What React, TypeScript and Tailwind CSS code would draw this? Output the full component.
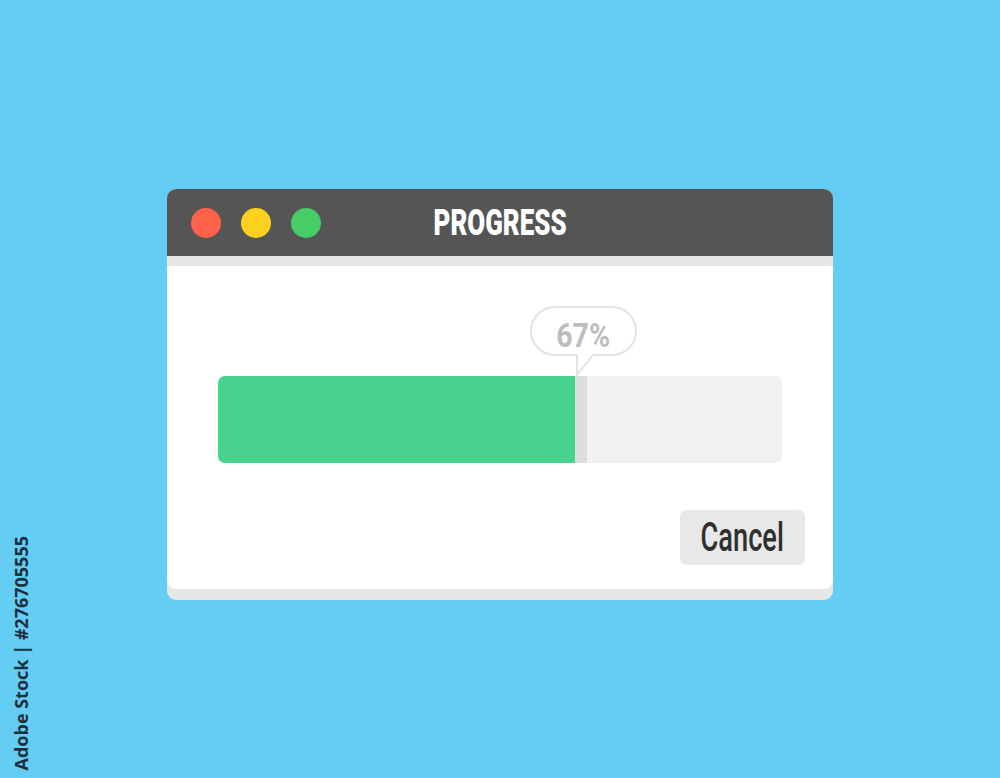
import React from "react";

function Bubble({ label }: { label: string }) {
  return (
    <div className="relative ml-[312px] h-[70px] w-[107px]">
      <svg width="107" height="70" viewBox="0 0 107 70" className="block">
        <path
          d="M25 1 H82 A24 24 0 0 1 82 49 H63 L47 69 V49 H25 A24 24 0 0 1 25 1 Z"
          fill="#ffffff"
          stroke="#e3e3e3"
          strokeWidth="2"
          strokeLinejoin="round"
        />
      </svg>
      <div className="absolute left-0 top-0 flex h-[50px] w-[107px] items-center justify-center pt-[7px]">
        <span className="inline-block scale-x-[0.84] text-[34px] font-bold leading-none text-[#bdbdbd] [font-family:Roboto,'Liberation_Sans',sans-serif]">
          {label}
        </span>
      </div>
    </div>
  );
}

function ProgressBar({ value }: { value: number }) {
  return (
    <div className="flex h-[87px] w-full overflow-hidden rounded-[7px] bg-[#f1f1f1]">
      <div className="h-full bg-[#47d38e]" style={{ width: `${value}%` }} />
      <div className="h-full w-[12px] bg-[#dddddd]" />
    </div>
  );
}

export default function App() {
  return (
    <div className="relative min-h-[778px] w-full bg-[#63cdf4] pt-[189px]">
      <div className="mx-auto w-[666px] rounded-[9px] bg-[#e6e6e6] pb-[11px]">
        {/* title bar */}
        <div className="grid h-[67px] grid-cols-[1fr_auto_1fr] items-center rounded-t-[9px] bg-[#555555]">
          <div className="flex items-center gap-[20px] pl-[24px]">
            <span className="h-[30px] w-[30px] rounded-full bg-[#fe6249]" />
            <span className="h-[30px] w-[30px] rounded-full bg-[#ffd11f]" />
            <span className="h-[30px] w-[30px] rounded-full bg-[#47cd65]" />
          </div>
          <div className="flex w-[140px] justify-center">
            <span className="inline-block scale-x-[0.7] text-[37px] font-black leading-none text-white [font-family:Roboto,'Liberation_Sans',sans-serif]">
              PROGRESS
            </span>
          </div>
          <div />
        </div>
        <div className="h-[10px] bg-[#e6e6e6]" />
        {/* body */}
        <div className="flex h-[323px] flex-col rounded-b-[9px] bg-white pt-[40px]">
          <div className="px-[51px]">
            <Bubble label="67%" />
            <ProgressBar value={63.3} />
          </div>
          <div className="mt-[47px] flex justify-end pr-[28px]">
            <button className="flex h-[55px] w-[125px] items-center justify-center rounded-[6px] bg-[#e8e8e8]">
              <span className="inline-block scale-x-[0.68] text-[40px] font-medium leading-none text-[#2f2f2f] [font-family:Roboto,'Liberation_Sans',sans-serif]">
                Cancel
              </span>
            </button>
          </div>
        </div>
      </div>
      <div className="absolute bottom-[8px] left-[12px] rotate-180 text-[18px] font-bold leading-none text-[#1d2f3d] [font-family:'Open_Sans',sans-serif] [writing-mode:vertical-rl]">
        Adobe Stock | #276705555
      </div>
    </div>
  );
}
